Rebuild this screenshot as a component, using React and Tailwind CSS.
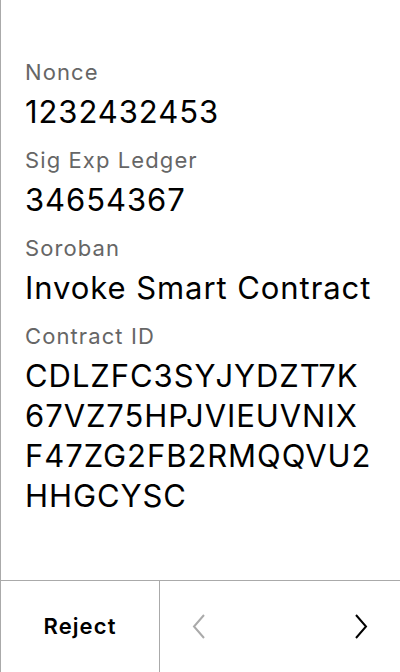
import React from 'react';

const rows = [
  { label: 'Nonce', value: '1232432453' },
  { label: 'Sig Exp Ledger', value: '34654367' },
  { label: 'Soroban', value: 'Invoke Smart Contract' },
  { label: 'Contract ID', value: 'CDLZFC3SYJYDZT7K67VZ75HPJVIEUVNIXF47ZG2FB2RMQQVU2HHGCYSC' },
];

function Chevron({ dir, color }) {
  const pts = dir === 'left' ? '12,1 2,12.5 12,24' : '2,1 12,12.5 2,24';
  return (
    <svg width="14" height="25" viewBox="0 0 14 25" fill="none">
      <polyline points={pts} stroke={color} strokeWidth="2" />
    </svg>
  );
}

export default function App() {
  return (
    <div className="w-[400px] h-[672px] flex flex-col bg-white border-l border-[#aaaaaa] font-['Inter','Liberation_Sans',sans-serif]">
      {/* 상세 정보 */}
      <div className="flex-1 pt-[58px] pl-6 pr-[24px]">
        {rows.map((r, i) => (
          <div key={r.label} className={i > 0 ? 'mt-[14px]' : ''}>
            <div className="text-[22px] leading-[28px] tracking-[0.05em] text-[#666666]">{r.label}</div>
            <div className="mt-[6px] text-[31px] leading-[40px] tracking-[0.03em] text-black break-words">{r.value}</div>
          </div>
        ))}
      </div>

      {/* 하단 버튼 */}
      <div className="h-[92px] flex border-t border-[#aaaaaa]">
        <button type="button" className="w-[159px] border-r border-[#aaaaaa] flex items-center justify-center text-[22px] font-semibold text-black tracking-[0.05em]">
          Reject
        </button>
        <div className="flex-1 flex items-center justify-between pl-8 pr-8">
          <button type="button" aria-label="previous">
            <Chevron dir="left" color="#aaaaaa" />
          </button>
          <button type="button" aria-label="next">
            <Chevron dir="right" color="#000000" />
          </button>
        </div>
      </div>
    </div>
  );
}
